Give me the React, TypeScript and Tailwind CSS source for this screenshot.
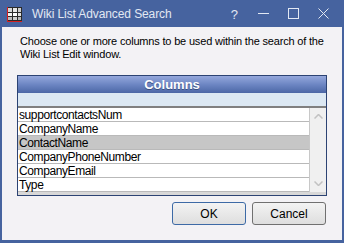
const columns = [
  "supportcontactsNum",
  "CompanyName",
  "ContactName",
  "CompanyPhoneNumber",
  "CompanyEmail",
  "Type",
];

function AppIcon() {
  return (
    <svg width="15" height="15" viewBox="0 0 15 15" className="shrink-0">
      <rect x="0" y="0" width="15" height="15" fill="#2a2a2a" />
      <rect x="1" y="1" width="4" height="4" fill="#d8d8d8" />
      <rect x="6" y="1" width="4" height="4" fill="#e8e8e8" />
      <rect x="11" y="1" width="3" height="4" fill="#d0d0d0" />
      <rect x="1" y="6" width="4" height="3" fill="#f4f4f4" />
      <rect x="6" y="6" width="4" height="3" fill="#ffffff" />
      <rect x="11" y="6" width="3" height="3" fill="#e0e0e0" />
      <rect x="1" y="10" width="4" height="3" fill="#bdbdbd" />
      <rect x="6" y="10" width="4" height="3" fill="#cfcfcf" />
      <rect x="11" y="10" width="3" height="3" fill="#b8b8b8" />
      <rect x="0" y="0" width="1" height="15" fill="#d42020" />
      <rect x="0" y="14" width="15" height="1" fill="#d42020" />
    </svg>
  );
}

function TitleBar() {
  return (
    <div className="h-[27px] flex items-center text-[#e2e8f3] shrink-0">
      <div className="pl-[5px] pt-[1px]">
        <AppIcon />
      </div>
      <span className="ml-[10px] text-[12px] leading-none tracking-[-0.1px]">Wiki List Advanced Search</span>
      <span className="ml-auto text-[13px] leading-none pt-[2px] mr-[20px]">?</span>
      <svg width="11" height="11" viewBox="0 0 11 11" className="mr-[19px]">
        <line x1="0" y1="5.5" x2="11" y2="5.5" stroke="#e2e8f3" strokeWidth="1" />
      </svg>
      <svg width="11" height="11" viewBox="0 0 11 11" className="mr-[19px]">
        <rect x="0.5" y="0.5" width="10" height="10" fill="none" stroke="#e2e8f3" strokeWidth="1" />
      </svg>
      <svg width="11" height="11" viewBox="0 0 11 11" className="mr-[13px]">
        <path d="M0.5 0.5 L10.5 10.5 M10.5 0.5 L0.5 10.5" stroke="#e2e8f3" strokeWidth="1" />
      </svg>
    </div>
  );
}

function ColumnsGrid() {
  return (
    <div className="ml-[15px] mt-[14px] w-[310px] border border-[#2c4373] bg-[#d4d4d4]">
      <div className="h-[17px] bg-gradient-to-b from-[#95a8dc] via-[#6d86c3] to-[#4c67a6] flex items-center justify-center text-white font-bold text-[13px] leading-none [text-shadow:0_1px_0_#3a4f80]">
        Columns
      </div>
      <div className="h-[15px] bg-[#dce8f3] border-b-[2px] border-[#808080]" />
      <div className="flex">
        <div className="flex-1 bg-white">
          {columns.map((c) => (
            <div
              key={c}
              className={`h-[14px] border-b border-[#b9b9b9] flex items-center text-[12px] leading-none tracking-[-0.4px] text-black pl-[1px] ${
                c === "ContactName" ? "bg-[#c6c6c6]" : ""
              }`}
            >
              {c}
            </div>
          ))}
        </div>
        <div className="w-[17px] bg-[#f0f0f0] border-l border-[#c8c8c8] flex flex-col items-center justify-between py-[6px]">
          <svg width="9" height="5" viewBox="0 0 9 5">
            <path d="M0.5 4.5 L4.5 0.5 L8.5 4.5" fill="none" stroke="#c2c2c2" strokeWidth="1.5" />
          </svg>
          <svg width="9" height="5" viewBox="0 0 9 5">
            <path d="M0.5 0.5 L4.5 4.5 L8.5 0.5" fill="none" stroke="#c2c2c2" strokeWidth="1.5" />
          </svg>
        </div>
      </div>
      <div className="h-[3px] bg-[#d8d8d8]" />
    </div>
  );
}

function DialogButton({ label, focused }: { label: string; focused?: boolean }) {
  return (
    <button
      className={`w-[74px] h-[23px] rounded-[3px] border text-[12px] leading-none text-black bg-gradient-to-b from-[#f3f3f3] to-[#dedede] ${
        focused ? "border-[#3d6aa6]" : "border-[#707070]"
      }`}
    >
      {label}
    </button>
  );
}

export default function App() {
  return (
    <div
      className="w-[344px] h-[243px] bg-[#46639f] flex flex-col px-[2px] pb-[3px] overflow-hidden"
      style={{ fontFamily: '"Liberation Sans", Arial, sans-serif' }}
    >
      <TitleBar />
      <div className="flex-1 bg-[#f3f2f5] flex flex-col">
        <p className="pt-[8px] pl-[18px] pr-[6px] text-[11px] leading-[13px] tracking-[-0.18px] text-black">
          Choose one or more columns to be used within the search of the
          <br />
          Wiki List Edit window.
        </p>
        <ColumnsGrid />
        <div className="flex justify-end gap-[6px] mt-[6px] pr-[16px]">
          <DialogButton label="OK" focused />
          <DialogButton label="Cancel" />
        </div>
      </div>
    </div>
  );
}
